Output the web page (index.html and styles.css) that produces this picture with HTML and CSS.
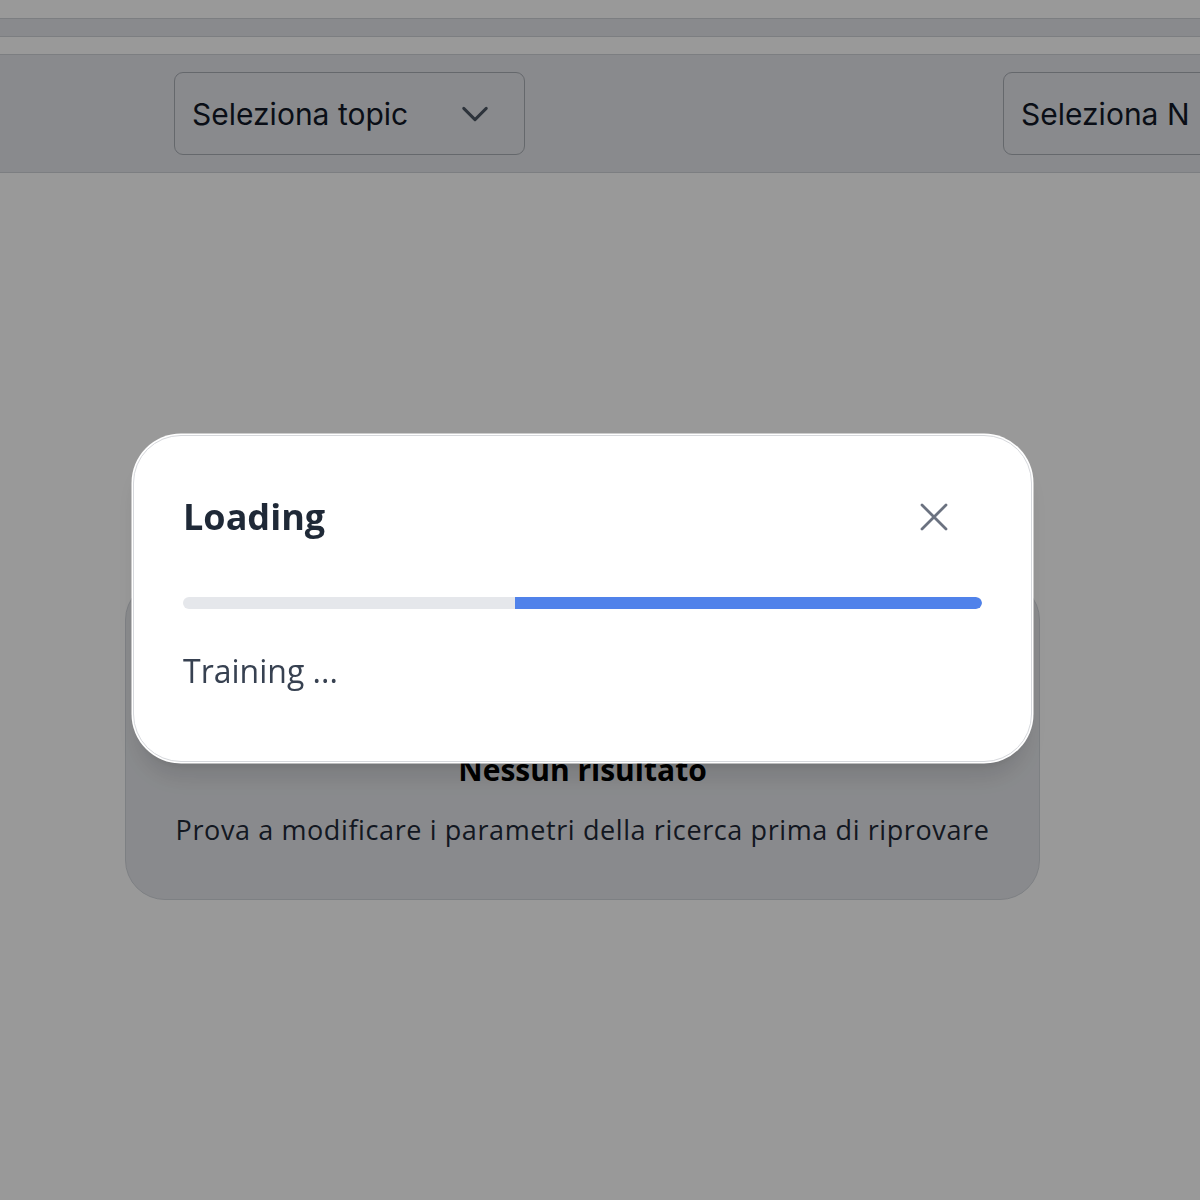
FILE: index.html
```html
<!DOCTYPE html>
<html lang="it">
<head>
<meta charset="utf-8">
<title>Loading</title>
<link rel="stylesheet" href="styles.css">
</head>
<body>
<div class="page">
  <div class="strip strip-a"></div>
  <div class="strip strip-b"></div>
  <div class="strip strip-c"></div>
  <header class="filters">
    <div class="select select-topic">
      <span class="select-label">Seleziona topic</span>
      <svg class="chevron" viewBox="0 0 24 24" width="36" height="36" fill="none" stroke="currentColor" stroke-width="2" stroke-linecap="round" stroke-linejoin="round"><path d="M4.5 8.25 12 15.75 19.5 8.25"/></svg>
    </div>
    <div class="select select-n">
      <span class="select-label">Seleziona N</span>
    </div>
  </header>
  <main class="content">
    <section class="empty-card">
      <h2 class="empty-title">Nessun risultato</h2>
      <p class="empty-text">Prova a modificare i parametri della ricerca prima di riprovare</p>
    </section>
  </main>
</div>
<div class="overlay"></div>
<div class="modal" role="dialog">
  <div class="modal-head">
    <h1 class="modal-title">Loading</h1>
    <button class="close" aria-label="Chiudi">
      <svg viewBox="0 0 24 24" width="48" height="48" fill="none" stroke="currentColor" stroke-width="1.4" stroke-linecap="round"><path d="M6 6l12 12M18 6 6 18"/></svg>
    </button>
  </div>
  <div class="progress"><div class="progress-fill"></div></div>
  <p class="modal-status">Training ...</p>
</div>
</body>
</html>
```
FILE: styles.css
```css
* { box-sizing: border-box; }
html, body { margin: 0; padding: 0; }
body {
  background: #ffffff;
  font-family: "Open Sans", "Noto Sans", sans-serif;
  width: 1200px;
  height: 1200px;
  overflow: hidden;
}
.page { width: 1200px; }
.strip { border-bottom: 1px solid #cfd2d8; }
.strip-a { height: 19px; background: #ffffff; }
.strip-b { height: 18px; background: #e5e7eb; }
.strip-c { height: 18px; background: #ffffff; }
.filters {
  height: 118px;
  background: #e5e7eb;
  border-bottom: 1px solid #cfd2d8;
  display: flex;
  align-items: flex-start;
  padding: 17px 0 0 174px;
  gap: 478px;
  overflow: hidden;
}
.select {
  flex: none;
  height: 83px;
  border: 1.5px solid #a9adb5;
  border-radius: 9px;
  display: flex;
  align-items: center;
  padding: 0 0 0 17px;
  font-family: "Inter", sans-serif;
  font-size: 30px;
  color: #111827;
}
.select-topic { width: 351px; }
.select-n { width: 260px; }
.chevron { margin-left: auto; margin-right: 31px; color: #4b5563; }
.content { padding: 407px 0 0 125px; }
.empty-card {
  width: 915px;
  height: 320px;
  background: #e5e7eb;
  border: 1.5px solid #d1d5db;
  border-radius: 40px;
  display: flex;
  flex-direction: column;
  align-items: center;
  padding-top: 169px;
}
.empty-title {
  margin: 0;
  font-size: 30px;
  line-height: 40px;
  font-weight: 700;
  color: #000000;
}
.empty-text {
  margin: 22px 0 0;
  font-size: 27px;
  line-height: 36px;
  letter-spacing: 0.6px;
  color: #1f2937;
}
.overlay {
  position: fixed;
  inset: 0;
  background: rgba(0, 0, 0, 0.4);
}
.modal {
  position: fixed;
  left: 133px;
  top: 435px;
  width: 899px;
  height: 327px;
  background: #ffffff;
  border: 1px solid #d6d8dc;
  border-radius: 48px;
  box-shadow: 0 0 0 1.5px #ffffff, 0 20px 25px -5px rgba(0,0,0,0.12), 0 8px 10px -6px rgba(0,0,0,0.1);
  padding: 57px 49px 0 49px;
}
.modal-head {
  display: flex;
  align-items: center;
  justify-content: space-between;
  height: 48px;
}
.modal-title {
  margin: 0;
  font-size: 36px;
  line-height: 48px;
  font-weight: 700;
  color: #1f2937;
}
.close {
  border: 0;
  background: none;
  padding: 0;
  margin-right: 24px;
  color: #6b7280;
  display: flex;
}
.progress {
  margin-top: 56px;
  height: 12px;
  background: #e5e7eb;
  border-radius: 6px;
  overflow: hidden;
  display: flex;
  justify-content: flex-end;
}
.progress-fill {
  width: 58.45%;
  background: #5082ea;
  border-radius: 0 6px 6px 0;
}
.modal-status {
  margin: 42px 0 0;
  font-size: 32px;
  line-height: 40px;
  color: #374151;
}
```
